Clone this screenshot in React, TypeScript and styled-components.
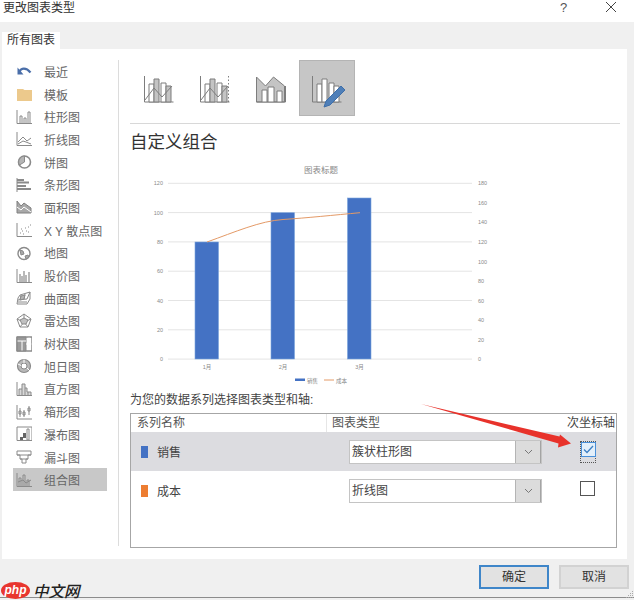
import { ReactNode } from "react";
import styled, { createGlobalStyle } from "styled-components";

const GlobalStyle = createGlobalStyle`
  html, body {
    margin: 0;
    padding: 0;
    background: #fff;
  }
  body {
    font-family: "Liberation Sans", "Noto Sans CJK SC", sans-serif;
  }
`;

const Window = styled.div`
  position: relative;
  width: 634px;
  height: 600px;
  box-sizing: border-box;
  overflow: hidden;
  background: #f0f0f0;
  display: flex;
  flex-direction: column;
  color: #444;
  font-size: 12px;
`;

const TitleBar = styled.div`
  height: 22px;
  flex: none;
  background: #fff;
  display: flex;
  justify-content: space-between;
  padding-left: 3px;
`;

const Title = styled.div`
  line-height: 16px;
  color: #333;
`;

const TitleButtons = styled.div`
  display: flex;
`;

const HelpButton = styled.div`
  width: 47px;
  height: 16px;
  line-height: 16px;
  text-align: center;
  font-size: 13px;
  color: #555;
`;

const CloseButton = styled.div`
  width: 47px;
  height: 14px;
  display: flex;
  justify-content: center;
  align-items: center;
`;

const TabStrip = styled.div`
  height: 27px;
  flex: none;
  padding-left: 2px;
  display: flex;
  align-items: flex-end;
`;

const Tab = styled.div`
  width: 58px;
  height: 17px;
  background: #fff;
  line-height: 17px;
  text-align: center;
  color: #333;
`;

const Panel = styled.div`
  width: 625px;
  height: 510px;
  flex: none;
  margin-left: 2px;
  background: #fff;
  display: flex;
`;

const Sidebar = styled.div`
  width: 105px;
  height: 486px;
  flex: none;
  margin-top: 11px;
  padding-left: 11px;
  border-right: 1px solid #dcdcdc;
  display: grid;
  grid-auto-rows: 22.7px;
  align-content: start;
`;

const SideItem = styled.div<{ $active?: boolean }>`
  width: 94px;
  box-sizing: border-box;
  padding-left: 3px;
  display: flex;
  align-items: center;
  gap: 12px;
  color: #666;
  white-space: nowrap;
  background: ${(p) => (p.$active ? "#c8c8c8" : "transparent")};
`;

const SideSvg = styled.svg`
  width: 16px;
  height: 16px;
  flex: none;
`;

const Main = styled.div`
  width: 490px;
  padding: 11px 0 0 11px;
`;

const TypeRow = styled.div`
  display: flex;
  height: 57px;
  margin-left: 1px;
`;

const TypeButton = styled.div<{ $active?: boolean }>`
  width: 56px;
  height: 56px;
  box-sizing: border-box;
  display: flex;
  align-items: center;
  justify-content: center;
  background: ${(p) => (p.$active ? "#c6c6c6" : "transparent")};
  border: 1px solid ${(p) => (p.$active ? "#b4b4b4" : "transparent")};
`;

const Divider = styled.div`
  height: 1px;
  margin-top: 6px;
  background: #d8d8d8;
`;

const Heading = styled.div`
  height: 36px;
  line-height: 37px;
  font-size: 17.5px;
  color: #333;
`;

const ChartSvg = styled.svg`
  display: block;
  width: 360px;
  height: 228px;
`;

const ChartText = styled.text`
  fill: #8a8a8a;
  font-family: "Liberation Sans", "Noto Sans CJK SC", sans-serif;
`;

const SeriesLabel = styled.div`
  height: 25px;
  line-height: 25px;
  color: #444;
`;

const SeriesTable = styled.div`
  width: 487px;
  height: 135px;
  box-sizing: border-box;
  border: 1px solid #a6a6a6;
`;

const rowGrid = `
  display: grid;
  grid-template-columns: 189px 1fr 74px;
`;

const HeaderRow = styled.div`
  ${rowGrid}
  height: 18px;
  line-height: 18px;
  padding-left: 6px;
  color: #555;
`;

const TypeHeader = styled.span`
  border-left: 1px solid #e6e6e6;
  padding-left: 5px;
`;

const AxisHeader = styled.span`
  padding-left: 25px;
  white-space: nowrap;
  color: #444;
`;

const SeriesRow = styled.div<{ $active?: boolean }>`
  ${rowGrid}
  height: 39px;
  padding-left: 6px;
  align-items: center;
  background: ${(p) => (p.$active ? "#dcdce0" : "transparent")};
`;

const SeriesName = styled.div`
  display: flex;
  align-items: center;
  gap: 9px;
  padding-left: 4px;
`;

const Swatch = styled.div<{ $color: string }>`
  width: 7px;
  height: 12px;
  background: ${(p) => p.$color};
`;

const TypeCell = styled.div`
  padding-left: 23px;
`;

const Select = styled.div`
  width: 193px;
  height: 24px;
  box-sizing: border-box;
  display: flex;
  background: #fff;
  border: 1px solid #c4c4c4;
`;

const SelectValue = styled.div`
  flex: 1;
  line-height: 22px;
  padding-left: 2px;
  color: #444;
`;

const SelectButton = styled.div`
  width: 24px;
  background: #dcdcdc;
  border-left: 1px solid #b4b4b4;
  border-right: 1px solid #a4a4a4;
  display: flex;
  align-items: center;
  justify-content: center;
`;

const AxisCell = styled.div`
  padding-left: 38px;
`;

const FocusBox = styled.div`
  width: 14px;
  height: 20px;
  border: 1px dotted #555;
`;

const CheckBox = styled.div<{ $checked?: boolean }>`
  width: 13px;
  height: 13px;
  margin-top: ${(p) => (p.$checked ? "0" : "-4px")};
  border: 1px solid ${(p) => (p.$checked ? "#4a90d9" : "#555")};
  background: ${(p) => (p.$checked ? "#e3effa" : "#fff")};
  display: flex;
  align-items: center;
  justify-content: center;
`;

const BottomBar = styled.div`
  height: 39px;
  flex: none;
  box-sizing: border-box;
  padding: 6px 5px 0 0;
  border-bottom: 1px solid #8c8c8c;
  display: flex;
  justify-content: flex-end;
  gap: 10px;
`;

const DialogButton = styled.div<{ $primary?: boolean }>`
  width: 70px;
  height: 24px;
  box-sizing: border-box;
  line-height: 20px;
  text-align: center;
  color: #333;
  background: #e2e2e2;
  border: ${(p) => (p.$primary ? "2px solid #3f86c9" : "2px solid #d2d2d2")};
`;

const Arrow = styled.svg`
  position: absolute;
  inset: 0;
  width: 634px;
  height: 600px;
  pointer-events: none;
`;

const Watermark = styled.div`
  position: absolute;
  left: 1px;
  bottom: 1px;
  display: flex;
  align-items: center;
  gap: 3px;
`;

const PhpBadge = styled.div`
  width: 29px;
  height: 17px;
  border-radius: 50%;
  background: #e8362f;
  color: #fff;
  font: italic bold 12px/16px "Liberation Sans", sans-serif;
  text-align: center;
`;

const SiteName = styled.div`
  font: italic 500 15.5px/17px "Noto Sans CJK SC", sans-serif;
  color: #222;
`;

const Grip = styled.svg`
  position: absolute;
  right: 0;
  bottom: 1px;
  width: 9px;
  height: 9px;
`;

const Stroke = ({ children }: { children: ReactNode }) => (
  <SideSvg viewBox="0 0 16 16" fill="none" stroke="#8a8a8a" strokeWidth="1">
    {children}
  </SideSvg>
);

const Axis = () => <path d="M1 1v13.5h15" />;

const sidebarItems: { label: string; icon: ReactNode }[] = [
  {
    label: "最近",
    icon: (
      <SideSvg viewBox="0 0 16 16" fill="none">
        <path d="M3.5 8.5C5 5 10 4 14.5 9.5" stroke="#4a6ea9" strokeWidth="2.2" />
        <path d="M1.5 4.5v7h6z" fill="#4a6ea9" />
      </SideSvg>
    ),
  },
  {
    label: "模板",
    icon: (
      <SideSvg viewBox="0 0 16 16">
        <path d="M1 3h6l1.5 1H16v11H1z" fill="#ecc98c" />
      </SideSvg>
    ),
  },
  {
    label: "柱形图",
    icon: (
      <Stroke>
        <Axis />
        <path d="M4 14V7h2v7M8 14V9h2v5M12 14V3h2v11" />
      </Stroke>
    ),
  },
  {
    label: "折线图",
    icon: (
      <Stroke>
        <Axis />
        <path d="M2 11l5-5 4 4 4-3M2 13l5-3 3 1 5 2" />
      </Stroke>
    ),
  },
  {
    label: "饼图",
    icon: (
      <Stroke>
        <circle cx="8.5" cy="8" r="6" strokeWidth="1.6" />
        <path d="M8.5 8V2a6 6 0 0 0-5 9z" fill="#b5b5b5" />
      </Stroke>
    ),
  },
  {
    label: "条形图",
    icon: (
      <Stroke>
        <path d="M1 1v14" />
        <path d="M1 3h7M1 5.5h12M1 9h9M1 12h14" strokeWidth="1.8" />
      </Stroke>
    ),
  },
  {
    label: "面积图",
    icon: (
      <SideSvg viewBox="0 0 16 16" fill="#8a8a8a" stroke="#808080">
        <path d="M1 2l4 5 3-3 7 5v5H1z" fill="#a8a8a8" />
        <path d="M1 8l4 3 3-3 7 5" fill="none" stroke="#fff" />
      </SideSvg>
    ),
  },
  {
    label: "X Y 散点图",
    icon: (
      <Stroke>
        <Axis />
        <path d="M4 11h1M6 9h1M7 12h1M9 6h1M10 9h1M12 5h1M12 10h1M14 3h1M5 7h1" strokeDasharray="1 1" />
      </Stroke>
    ),
  },
  {
    label: "地图",
    icon: (
      <Stroke>
        <circle cx="8" cy="8.5" r="6" strokeWidth="1.4" />
        <path d="M4 5l3 1 1 3-3 1zM9 11l3-1 1 2-3 2z" fill="#a8a8a8" />
      </Stroke>
    ),
  },
  {
    label: "股价图",
    icon: (
      <Stroke>
        <Axis />
        <path d="M4 6v8M6 8v6M8 3v11M10 7v7M13 4v10" strokeWidth="1.2" />
      </Stroke>
    ),
  },
  {
    label: "曲面图",
    icon: (
      <Stroke>
        <path d="M4 5l10-3v7l-3 5H1l1-6z" />
        <path d="M2 10l9-1 3-7M5 5l-1 5M9 4l-1 5M2 12h9" />
        <path d="M4 10l1-4 4-1-1 4z" fill="#b5b5b5" />
      </Stroke>
    ),
  },
  {
    label: "雷达图",
    icon: (
      <Stroke>
        <path d="M8 1l7 5-3 8H4L1 6z" />
        <path d="M8 1v8M1 6l7 3 7-3M4 14l4-5 4 5" />
        <path d="M8 5l4 2-2 4-4 0-2-4z" fill="#c0c0c0" />
      </Stroke>
    ),
  },
  {
    label: "树状图",
    icon: (
      <Stroke>
        <rect x="1" y="1" width="15" height="14" />
        <path d="M1 1h9v14H1z" fill="#9a9a9a" />
        <path d="M1 5h9M6 5v10M10 8h6M13 1v7" stroke="#fff" />
        <rect x="1" y="1" width="15" height="14" />
      </Stroke>
    ),
  },
  {
    label: "旭日图",
    icon: (
      <Stroke>
        <circle cx="8" cy="8" r="6.5" fill="#b8b8b8" strokeWidth="1.2" />
        <circle cx="8" cy="8" r="3" fill="#fff" />
        <path d="M8 1.5V5M2 6l3 1.5M11 10l3 3" stroke="#fff" />
      </Stroke>
    ),
  },
  {
    label: "直方图",
    icon: (
      <Stroke>
        <Axis />
        <path d="M3 14V8h3V3h3v4h2v4h4v3M6 8v6M9 7v7M12 11v3" fill="#d8d8d8" />
      </Stroke>
    ),
  },
  {
    label: "箱形图",
    icon: (
      <Stroke>
        <path d="M1 1v14h15" />
        <path d="M4 4v9M3 7h2v3H3zM8 6v7M7 8h2v3H7zM13 2v9M12 4h2v3h-2z" />
      </Stroke>
    ),
  },
  {
    label: "瀑布图",
    icon: (
      <Stroke>
        <Axis />
        <path d="M1 1h15v13" />
        <path d="M4 11h3v3H4zM7 7h3v5H7z" fill="#666" stroke="none" />
        <path d="M11 3h2v11h-2z" />
      </Stroke>
    ),
  },
  {
    label: "漏斗图",
    icon: (
      <Stroke>
        <path d="M1 2h14v4H12v4H10v4H6v-4H4V6H1z" />
        <path d="M1 6h14M4 10h8" />
      </Stroke>
    ),
  },
  {
    label: "组合图",
    icon: (
      <Stroke>
        <Axis />
        <path d="M3 14V6h2v8M7 14V3h2v11M11 14V8h2v6" />
        <path d="M2 10l5-2 3 3 5-3" />
      </Stroke>
    ),
  },
];

const leftTicks = ["120", "100", "80", "60", "40", "20", "0"];
const rightTicks = ["180", "160", "140", "120", "100", "80", "60", "40", "20", "0"];
const bars = [
  { x: 195, top: 242, label: "1月" },
  { x: 271, top: 212.7, label: "2月" },
  { x: 347.5, top: 198, label: "3月" },
];

const TypeIcon = ({ kind }: { kind: number }) => (
  <svg width="40" height="40" viewBox="0 0 40 40" fill="none" stroke="#7d7d7d">
    {kind === 2 ? (
      <>
        <path d="M5.5 9l9 9 8-9 11 9v16h-28z" fill="#c4c4c4" />
        <path d="M11 34V22h5v12M17 34V19h6v15M26 34V23h5v11" fill="#fff" />
        <path d="M5.5 34h29M34.5 18v16" />
      </>
    ) : (
      <>
        <path d="M5.5 8v26h29" />
        {kind === 1 && <path d="M33.5 8v26" strokeDasharray="1.5 2" />}
        <path d="M10 16h5v18h-5z" fill="#fff" />
        <path d="M15 11h5v23h-5z" fill={kind === 3 ? "#fff" : "#c4c4c4"} />
        <path d="M22 15h5v19h-5z" fill="#fff" />
        <path d="M27 18h5v16h-5z" fill={kind === 3 ? "#fff" : "#c4c4c4"} />
        {kind !== 3 && <path d="M6 32l9-12 8 9 10-11" />}
        {kind === 3 && (
          <path d="M17 39l2-6 15-15 4 4-15 15z" fill="#4f7fb8" stroke="#3e6ea8" />
        )}
      </>
    )}
  </svg>
);

const ComboChart = () => (
  <ChartSvg viewBox="130 160 360 228">
    <ChartText x={321} y={173} fontSize="8.5" textAnchor="middle">图表标题</ChartText>
    {leftTicks.map((t, i) => (
      <g key={t}>
        <line x1="168" x2="472" y1={183.3 + i * 29.3} y2={183.3 + i * 29.3} stroke="#e4e4e4" />
        <ChartText x={163} y={185.3 + i * 29.3} fontSize="5.5" textAnchor="end">{t}</ChartText>
      </g>
    ))}
    {rightTicks.map((t, i) => (
      <ChartText key={i} x={478} y={185.3 + i * 19.55} fontSize="5.5">{t}</ChartText>
    ))}
    {bars.map((b) => (
      <g key={b.label}>
        <rect x={b.x} y={b.top} width="23.5" height={359 - b.top} fill="#4472c4" stroke="#7ba3dc" strokeWidth="0.6" />
        <ChartText x={b.x + 12} y={369} fontSize="5.5" textAnchor="middle">{b.label}</ChartText>
      </g>
    ))}
    <path d="M207 242C235 232 260 221 283 219.5S335 215 360 212.7" fill="none" stroke="#e49a67" strokeWidth="1" />
    <rect x="295" y="378.5" width="10" height="2.5" fill="#4472c4" />
    <ChartText x={307} y={382.5} fontSize="5.5">销售</ChartText>
    <line x1="324" x2="334" y1="380" y2="380" stroke="#e49a67" />
    <ChartText x={336} y={382.5} fontSize="5.5">成本</ChartText>
  </ChartSvg>
);

const Dropdown = ({ value }: { value: string }) => (
  <Select>
    <SelectValue>{value}</SelectValue>
    <SelectButton>
      <svg width="9" height="6" viewBox="0 0 9 6" fill="none" stroke="#777">
        <path d="M1 1l3.5 3.5L8 1" />
      </svg>
    </SelectButton>
  </Select>
);

const App = () => (
  <Window>
    <GlobalStyle />
    <TitleBar>
      <Title>更改图表类型</Title>
      <TitleButtons>
        <HelpButton>?</HelpButton>
        <CloseButton>
          <svg width="12" height="12" viewBox="0 0 12 12" stroke="#444">
            <path d="M1 1l10 10M11 1L1 11" />
          </svg>
        </CloseButton>
      </TitleButtons>
    </TitleBar>
    <TabStrip>
      <Tab>所有图表</Tab>
    </TabStrip>
    <Panel>
      <Sidebar>
        {sidebarItems.map((item) => (
          <SideItem key={item.label} $active={item.label === "组合图"}>
            {item.icon}
            <span>{item.label}</span>
          </SideItem>
        ))}
      </Sidebar>
      <Main>
        <TypeRow>
          {[0, 1, 2, 3].map((kind) => (
            <TypeButton key={kind} $active={kind === 3}>
              <TypeIcon kind={kind} />
            </TypeButton>
          ))}
        </TypeRow>
        <Divider />
        <Heading>自定义组合</Heading>
        <ComboChart />
        <SeriesLabel>为您的数据系列选择图表类型和轴:</SeriesLabel>
        <SeriesTable>
          <HeaderRow>
            <span>系列名称</span>
            <TypeHeader>图表类型</TypeHeader>
            <AxisHeader>次坐标轴</AxisHeader>
          </HeaderRow>
          <SeriesRow $active>
            <SeriesName>
              <Swatch $color="#4472c4" />
              销售
            </SeriesName>
            <TypeCell>
              <Dropdown value="簇状柱形图" />
            </TypeCell>
            <AxisCell>
              <FocusBox>
                <CheckBox $checked>
                  <svg width="11" height="9" viewBox="0 0 11 9" fill="none" stroke="#3d7fc4" strokeWidth="1.3">
                    <path d="M1 4.5l3 3L10 1" />
                  </svg>
                </CheckBox>
              </FocusBox>
            </AxisCell>
          </SeriesRow>
          <SeriesRow>
            <SeriesName>
              <Swatch $color="#ed7d31" />
              成本
            </SeriesName>
            <TypeCell>
              <Dropdown value="折线图" />
            </TypeCell>
            <AxisCell>
              <CheckBox />
            </AxisCell>
          </SeriesRow>
        </SeriesTable>
      </Main>
    </Panel>
    <BottomBar>
      <DialogButton $primary>确定</DialogButton>
      <DialogButton>取消</DialogButton>
    </BottomBar>
    <Arrow viewBox="0 0 634 600">
      <path d="M421 404L559.5 436.5 560 434.5 571 443.5 558 447.5 558.5 443.5z" fill="#e8322b" />
    </Arrow>
    <Watermark>
      <PhpBadge>php</PhpBadge>
      <SiteName>中文网</SiteName>
    </Watermark>
    <Grip viewBox="0 0 9 9" fill="#aaa">
      <path d="M7 1h1v1H7zM5 3h1v1H5zM7 3h1v1H7zM3 5h1v1H3zM5 5h1v1H5zM7 5h1v1H7zM1 7h1v1H1zM3 7h1v1H3zM5 7h1v1H5zM7 7h1v1H7z" />
    </Grip>
  </Window>
);

export default App;
